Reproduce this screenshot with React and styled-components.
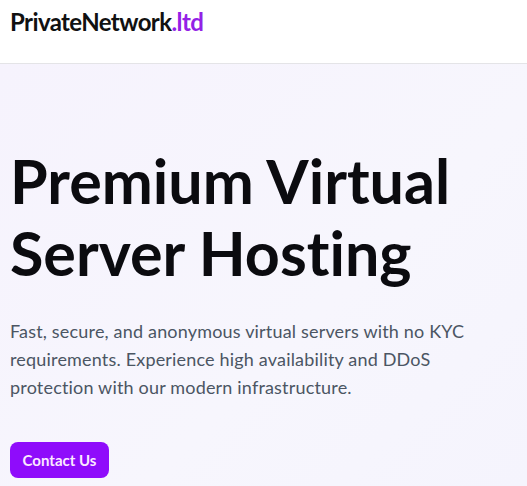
import React from "react";
import styled, { createGlobalStyle } from "styled-components";

const GlobalStyle = createGlobalStyle`
  * { box-sizing: border-box; }
  body {
    margin: 0;
    font-family: Lato, "Open Sans", sans-serif;
    font-variant-ligatures: none;
    background: #ffffff;
  }
`;

const Page = styled.div`
  width: 527px;
  height: 486px;
  overflow: hidden;
  display: flex;
  flex-direction: column;
`;

const Header = styled.header`
  height: 64px;
  flex-shrink: 0;
  display: flex;
  align-items: flex-start;
  padding: 7px 10px 0;
  background: #ffffff;
  border-bottom: 1px solid #e4e4e7;
`;

const Logo = styled.div`
  font-size: 24px;
  font-weight: 700;
  color: #111111;
  letter-spacing: -0.6px;

  span {
    color: #9321e6;
  }
`;

const Hero = styled.section`
  flex: 1;
  padding: 81px 10px 0;
  background: linear-gradient(135deg, #f6f3fd 0%, #f7f6fd 60%, #f5f4fd 100%);
`;

const Title = styled.h1`
  margin: 0;
  font-size: 61px;
  line-height: 72px;
  font-weight: 700;
  color: #0b0b0f;
`;

const Lead = styled.p`
  margin: 28px 0 0;
  font-size: 18px;
  line-height: 28px;
  letter-spacing: 0.18px;
  color: #4b5563;
  max-width: 490px;
`;

const ContactBtn = styled.button`
  margin-top: 41px;
  width: 99px;
  height: 36px;
  border: none;
  border-radius: 8px;
  background: #8f0cfb;
  color: #fbe9ff;
  font-family: inherit;
  font-size: 15px;
  font-weight: 700;
  cursor: pointer;
`;

export default function App() {
  return (
    <Page>
      <GlobalStyle />
      <Header>
        <Logo>
          PrivateNetwork<span>.ltd</span>
        </Logo>
      </Header>
      <Hero>
        <Title>
          Premium Virtual
          <br />
          Server Hosting
        </Title>
        <Lead>
          Fast, secure, and anonymous virtual servers with no KYC requirements.
          Experience high availability and DDoS protection with our modern
          infrastructure.
        </Lead>
        <ContactBtn>Contact Us</ContactBtn>
      </Hero>
    </Page>
  );
}
